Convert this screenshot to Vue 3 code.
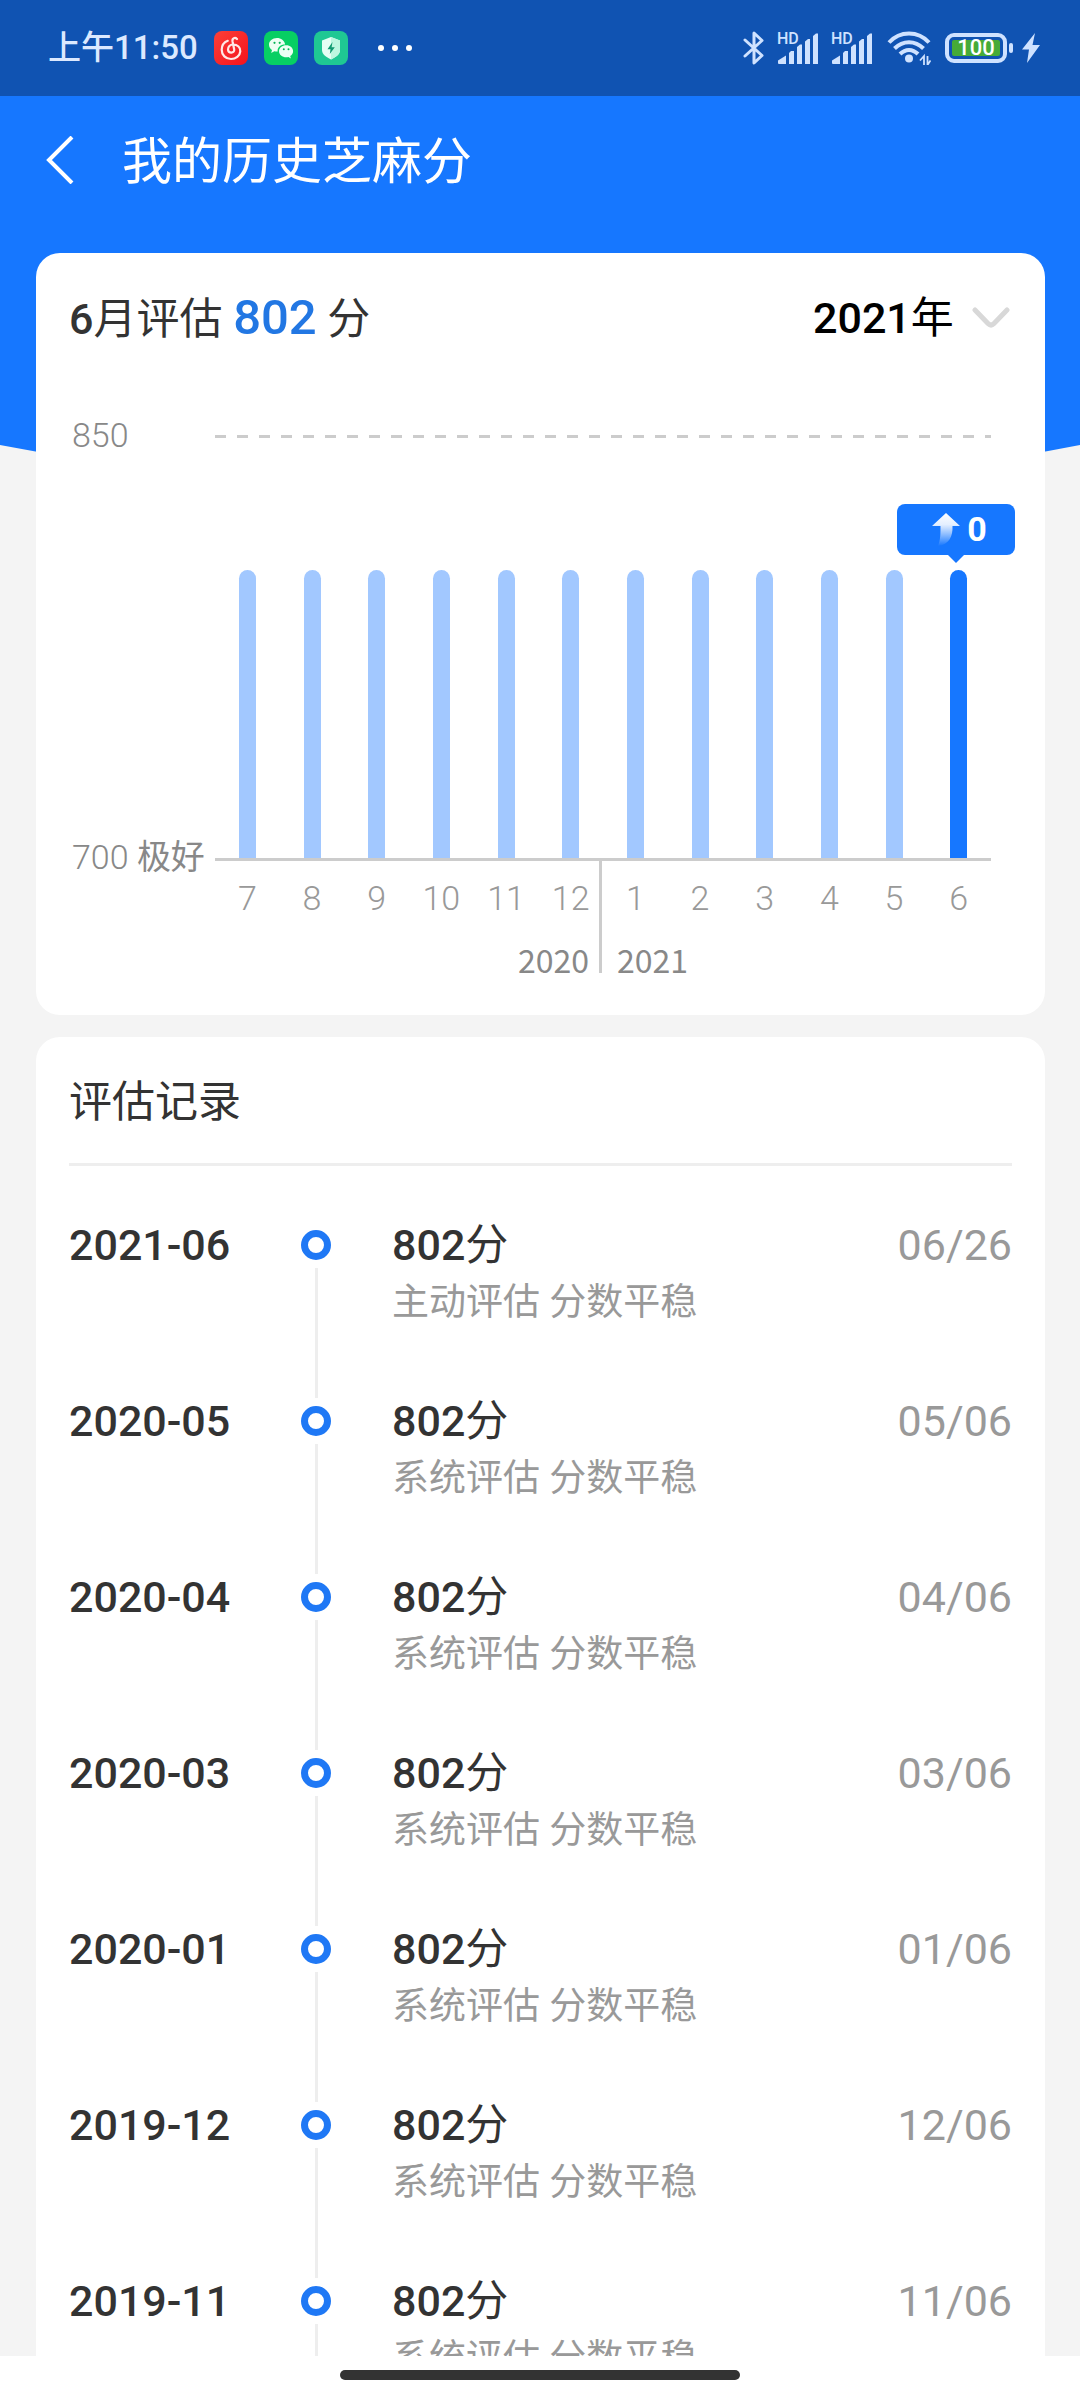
<script setup>
import { ref } from 'vue'

const year = ref('2021')
const years = ['2021', '2020', '2019']

const MIN = 700
const MAX = 850

const groups = [
  { year: '2020', months: [7, 8, 9, 10, 11, 12] },
  { year: '2021', months: [1, 2, 3, 4, 5, 6] },
]

const bars = groups.flatMap((g) => g.months.map((m) => ({ key: `${g.year}-${m}`, score: 802 })))
const barHeight = (score) => `${((score - MIN) / (MAX - MIN)) * 100}%`

const records = [
  { month: '2021-06', score: 802, note: '主动评估 分数平稳', date: '06/26' },
  { month: '2020-05', score: 802, note: '系统评估 分数平稳', date: '05/06' },
  { month: '2020-04', score: 802, note: '系统评估 分数平稳', date: '04/06' },
  { month: '2020-03', score: 802, note: '系统评估 分数平稳', date: '03/06' },
  { month: '2020-01', score: 802, note: '系统评估 分数平稳', date: '01/06' },
  { month: '2019-12', score: 802, note: '系统评估 分数平稳', date: '12/06' },
  { month: '2019-11', score: 802, note: '系统评估 分数平稳', date: '11/06' },
]
</script>

<template>
  <div class="screen">
    <div class="status">
      <div class="status-left">
        <span class="clock">上午11:50</span>
        <svg class="app" viewBox="0 0 34 34" aria-hidden="true">
          <defs>
            <linearGradient id="music-bg" x1="0" y1="0" x2="1" y2="1">
              <stop offset="0" stop-color="#fb4038" />
              <stop offset="1" stop-color="#f5121c" />
            </linearGradient>
          </defs>
          <rect width="34" height="34" rx="8" fill="url(#music-bg)" />
          <path
            d="M23 8C21 6 18 7.200 18.500 10.200L20.200 18.500C20.800 22.500 14.300 22.700 14 18.600C13.800 15.600 16.200 13.500 19 13.500C23.600 13.500 26.600 16.500 26.300 20.300C25.900 25 21.800 28 17 28C11.700 28 7.700 24.100 7.700 18.800C7.700 14.500 10.200 11.200 13.800 9.800"
            fill="none" stroke="#ffe9e6" stroke-width="2.200" stroke-linecap="round"
          />
        </svg>
        <svg class="app" viewBox="0 0 34 34" aria-hidden="true">
          <rect width="34" height="34" rx="8" fill="#07cf63" />
          <path d="M13 7C8.300 7 5 10 5 13.700c0 2.200 1.200 4.100 3 5.300l-.8 2.900 3.100-1.600c.9.2 1.800.3 2.700.3h.7C13 16 17 13.300 21.100 13.400 20.500 9.700 17 7 13 7z" fill="#edfff3" />
          <path d="M22.200 14.200c-4 0-7.200 2.600-7.200 6s3.200 6 7.200 6c.8 0 1.500-.1 2.200-.3l2.500 1.500-.7-2.300c1.700-1.100 2.900-2.900 2.900-4.900 0-3.400-3-6-6.900-6z" fill="#edfff3" />
          <g fill="#07b457">
            <circle cx="10.500" cy="11.800" r="1.100" /><circle cx="15.700" cy="11.800" r="1.100" />
            <circle cx="19.800" cy="18.300" r="1" /><circle cx="24.500" cy="18.300" r="1" />
          </g>
        </svg>
        <svg class="app" viewBox="0 0 34 34" aria-hidden="true">
          <rect width="34" height="34" rx="8" fill="#1fc893" />
          <path d="M17 6l9 3.500v9.500c0 4.500-4 7-9 9.500-5-2.500-9-5-9-9.500V9.500z" fill="#e6fff5" />
          <path d="M17 6l9 3.500v9.500c0 4.500-4 7-9 9.500z" fill="#bdf7e0" />
          <path d="M18.500 11l-5 7.200h3L15.800 23l5-6.800h-3.200z" fill="#129a72" />
        </svg>
        <span class="more"><i></i><i></i><i></i></span>
      </div>

      <div class="status-right">
        <svg class="bt" viewBox="0 0 22 34" aria-hidden="true">
          <path d="M2 9l17 15.500L11 32V2l8 7.500L2 25" fill="none" stroke="#cfe2ff" stroke-width="3" stroke-linejoin="round" stroke-linecap="round" />
        </svg>
        <span v-for="n in 2" :key="n" class="signal">
          <svg viewBox="0 0 42 31" aria-hidden="true">
            <g fill="#cfe2ff">
              <path d="M1 30v-2.500l8-5V31H2a1 1 0 0 1-1-1z" />
              <path d="M12 31V20l2-2h3v13z" />
              <path d="M20 31V14l3-2.500h2V31z" />
              <path d="M28 31V8.500L31 6h2v25z" />
              <path d="M36 31V3l3-2.500h2V31z" />
            </g>
          </svg>
          <span class="hd">HD</span>
        </span>
        <svg class="wifi" viewBox="0 0 44 34" aria-hidden="true">
          <g fill="none" stroke="#cfe2ff" stroke-width="4">
            <path d="M2 11.500C13 -.5 31 -.5 42 11.500" />
            <path d="M7.500 17.500C16 9 28 9 36.500 17.500" />
            <path d="M13 23C18.500 17.500 25.500 17.500 31 23" />
          </g>
          <circle cx="22" cy="27.500" r="4" fill="#cfe2ff" />
          <path d="M37 34V25l-4 4.500M40.500 25v9l3-4.500" fill="none" stroke="#cfe2ff" stroke-width="1.800" />
        </svg>
        <span class="battery"><span class="charge">100</span></span>
        <svg class="bolt" viewBox="0 0 18 30" aria-hidden="true">
          <path d="M13 0L0 16.500h7L5 30 18 12h-7.500z" fill="#cfe2ff" />
        </svg>
      </div>
    </div>

    <header class="nav">
      <button class="back" type="button" aria-label="返回">
        <svg viewBox="0 0 28 48" aria-hidden="true">
          <path d="M26 1L3 24l23 23" fill="none" stroke="#fff" stroke-width="4" />
        </svg>
      </button>
      <h1>我的历史芝麻分</h1>
    </header>

    <main class="content">
      <svg class="backdrop" viewBox="0 0 1080 274" preserveAspectRatio="none" aria-hidden="true">
        <path d="M0 0H1080V221Q540 326 0 221Z" fill="#1677ff" />
      </svg>

      <section class="card overview">
        <div class="overview-head">
          <p class="summary"><b>6</b>月评估 <strong>802</strong> 分</p>
          <label class="picker">
            <select v-model="year" aria-label="年份">
              <option v-for="y in years" :key="y" :value="y">{{ y }}年</option>
            </select>
            <svg viewBox="0 0 38 22" aria-hidden="true">
              <path d="M3 3l13 13.500q3 3 6 0L35 3" fill="none" stroke="#d8d8d8" stroke-width="5" stroke-linecap="round" />
            </svg>
          </label>
        </div>

        <div class="chart">
          <div class="scale">
            <span>850</span>
            <span>700 <em>极好</em></span>
          </div>
          <div class="plot">
            <div v-for="(bar, i) in bars" :key="bar.key" class="column">
              <div class="bar" :class="{ current: i === bars.length - 1 }" :style="{ height: barHeight(bar.score) }">
                <div v-if="i === bars.length - 1" class="tip">
                  <svg viewBox="0 0 28 33" aria-hidden="true">
                    <defs>
                      <linearGradient id="rise" x1="0" y1="0" x2="0" y2="1">
                        <stop offset="0" stop-color="#fff" />
                        <stop offset="0.35" stop-color="#e4efff" />
                        <stop offset="1" stop-color="#fff" stop-opacity="0" />
                      </linearGradient>
                    </defs>
                    <path d="M14 0L28 13H20.500C21 23 17 32 6 33 8.500 27 8.500 21 8.500 13H0z" fill="url(#rise)" />
                  </svg>
                  <span>0</span>
                </div>
              </div>
            </div>
          </div>
          <div class="axis">
            <div v-for="g in groups" :key="g.year" class="group">
              <div class="months">
                <span v-for="m in g.months" :key="m">{{ m }}</span>
              </div>
              <div class="year">{{ g.year }}</div>
            </div>
          </div>
        </div>
      </section>

      <section class="card history">
        <h2>评估记录</h2>
        <ol class="timeline">
          <li v-for="r in records" :key="r.month">
            <span class="month">{{ r.month }}</span>
            <span class="track"><i class="dot"></i><i class="line"></i></span>
            <div class="detail">
              <p class="score"><b>{{ r.score }}</b>分</p>
              <p class="note">{{ r.note }}</p>
            </div>
            <span class="date">{{ r.date }}</span>
          </li>
        </ol>
      </section>
    </main>

    <div class="gesture"><span></span></div>
  </div>
</template>

<style>
body {
  margin: 0;
  background: #f4f4f4;
}
</style>

<style scoped>
.screen {
  display: flex;
  flex-direction: column;
  height: 100vh;
  background: #f4f4f4;
  color: #333;
  font-family: Roboto, "Noto Sans CJK SC", sans-serif;
  font-size: 43px;
}

h1, h2, p, ol {
  margin: 0;
  padding: 0;
  font-weight: 400;
}

b {
  font-weight: 500;
}

svg {
  display: block;
}

/* status bar */
.status {
  display: flex;
  flex: none;
  align-items: center;
  justify-content: space-between;
  height: 96px;
  padding: 0 40px 0 48px;
  background: #1053b2;
}

.status-left,
.status-right {
  display: flex;
  align-items: center;
}

.status-left {
  gap: 16px;
}

.clock {
  color: #dce9ff;
  font: 500 33px/48px Roboto, "Noto Sans CJK SC", sans-serif;
}

.app {
  width: 34px;
  height: 34px;
}

.more {
  display: flex;
  gap: 8px;
  margin-left: 14px;
}

.more i {
  width: 6px;
  height: 6px;
  border-radius: 50%;
  background: #fff;
}

.status-right {
  gap: 12px;
}

.bt {
  width: 22px;
  height: 34px;
}

.signal {
  position: relative;
}

.signal svg {
  width: 42px;
  height: 31px;
}

.hd {
  position: absolute;
  top: 0;
  left: 0;
  color: #cfe2ff;
  font: 500 16px/11px Roboto, sans-serif;
}

.wifi {
  width: 44px;
  height: 34px;
  margin-left: 2px;
}

.battery {
  position: relative;
  box-sizing: border-box;
  width: 62px;
  height: 30px;
  margin: 0 3px 0 2px;
  padding: 3px;
  border: 4px solid #cfe2ff;
  border-radius: 9px;
}

.battery::after {
  content: "";
  position: absolute;
  top: 6px;
  right: -10px;
  width: 4px;
  height: 10px;
  border-radius: 2px;
  background: #cfe2ff;
}

.charge {
  display: block;
  border-radius: 2px;
  background: #46ab37;
  color: #fff;
  font: 500 22px/16px Roboto, sans-serif;
  text-align: center;
}

.bolt {
  width: 18px;
  height: 30px;
}

/* title bar */
.nav {
  display: flex;
  flex: none;
  align-items: center;
  gap: 48px;
  height: 128px;
  padding: 0 46px;
  background: #1677ff;
  color: #fff;
}

.back {
  padding: 0;
  border: 0;
  background: none;
  cursor: pointer;
}

.back svg {
  width: 28px;
  height: 48px;
}

.nav h1 {
  padding-top: 4px;
  font-size: 50px;
  line-height: 72px;
}

/* scrolling area */
.content {
  position: relative;
  flex: 1;
  min-height: 0;
  padding: 29px 35px 0 36px;
  overflow-y: auto;
  scrollbar-width: none;
}

.backdrop {
  position: absolute;
  top: 0;
  left: 0;
  width: 100%;
  height: 274px;
}

.card {
  position: relative;
  padding: 0 33px;
  border-radius: 24px;
  background: #fff;
}

.overview {
  padding-top: 35px;
  padding-bottom: 42px;
}

.overview-head {
  display: flex;
  align-items: center;
  justify-content: space-between;
  height: 60px;
}

.summary {
  line-height: 60px;
}

.summary strong {
  color: #2277e3;
  font-size: 49px;
  font-weight: 500;
}

.picker {
  position: relative;
  display: flex;
  align-items: center;
}

.picker select {
  padding: 0 58px 0 0;
  border: 0;
  background: none;
  color: #000;
  font: 400 43px/60px "Roboto Medium", Roboto, "Noto Sans CJK SC", sans-serif;
  appearance: none;
  outline: none;
}

.picker svg {
  position: absolute;
  right: 2px;
  width: 38px;
  height: 22px;
  pointer-events: none;
}

/* chart */
.chart {
  display: grid;
  grid-template-columns: 146px 1fr;
  margin: 87px 21px 0 0;
}

.scale {
  display: flex;
  flex-direction: column;
  justify-content: space-between;
  margin: -20px 0 -16px;
  padding-left: 3px;
  color: #888;
  font-size: 34px;
  font-weight: 300;
  line-height: 40px;
}

.scale em {
  font-style: normal;
  font-weight: 400;
}

.plot {
  display: flex;
  height: 423px;
  border-bottom: 3px solid #ccc;
  background: repeating-linear-gradient(90deg, #ccc 0 11px, transparent 11px 22px) top / 100% 3px no-repeat;
}

.column {
  display: flex;
  flex: 1;
  align-items: flex-end;
  justify-content: center;
}

.bar {
  position: relative;
  width: 17px;
  border-radius: 9px 9px 0 0;
  background: #a2c8ff;
}

.bar.current {
  background: #1677ff;
}

.tip {
  position: absolute;
  right: -48px;
  bottom: calc(100% + 15px);
  display: flex;
  box-sizing: border-box;
  align-items: center;
  gap: 7px;
  width: 118px;
  height: 51px;
  padding-left: 35px;
  border-radius: 8px;
  background: #1677ff;
  color: #fff;
  font-size: 34px;
  font-weight: 700;
  line-height: 51px;
}

.tip::after {
  content: "";
  position: absolute;
  top: 100%;
  left: 50%;
  margin-left: -8px;
  border: 8px solid transparent;
  border-top-color: #1677ff;
  border-bottom: 0;
}

.tip svg {
  width: 28px;
  height: 33px;
}

.axis {
  display: grid;
  grid-column: 2;
  grid-template-columns: 1fr 1fr;
}

.group {
  padding: 17px 0 2px;
}

.group:first-child .year {
  padding-right: 14px;
  text-align: right;
}

.group:last-child {
  margin-left: -4px;
  padding-left: 1px;
  border-left: 3px solid #ccc;
}

.group:last-child .year {
  padding-left: 14px;
}

.months {
  display: grid;
  grid-template-columns: repeat(6, 1fr);
  color: #999;
  font-size: 34px;
  font-weight: 300;
  line-height: 40px;
  text-align: center;
}

.year {
  margin-top: 29px;
  color: #888;
  font: 400 32px/24px "Noto Sans CJK SC", sans-serif;
}

/* history */
.history {
  margin-top: 22px;
}

.history h2 {
  padding-top: 4px;
  border-bottom: 3px solid #eee;
  font-size: 43px;
  line-height: 122px;
}

.timeline {
  padding-top: 64px;
  list-style: none;
}

.timeline li {
  display: grid;
  grid-template-columns: 232px 30px 1fr auto;
  min-height: 176px;
  line-height: 30px;
}

.month {
  font-weight: 500;
}

.track {
  display: flex;
  flex-direction: column;
  align-items: center;
}

.dot {
  box-sizing: border-box;
  width: 30px;
  height: 30px;
  border: 7px solid #1f78f5;
  border-radius: 50%;
}

.line {
  flex: 1;
  width: 3px;
  margin: 8px 0;
  background: #eee;
}

.detail {
  padding-left: 61px;
}

.note {
  margin-top: 21px;
  color: #999;
  font-size: 37px;
  line-height: 44px;
}

.date {
  color: #999;
}

/* gesture bar */
.gesture {
  display: flex;
  flex: none;
  justify-content: center;
  height: 44px;
  padding-top: 14px;
  box-sizing: border-box;
  background: #fff;
}

.gesture span {
  width: 37%;
  height: 10px;
  border-radius: 5px;
  background: #333;
}
</style>
